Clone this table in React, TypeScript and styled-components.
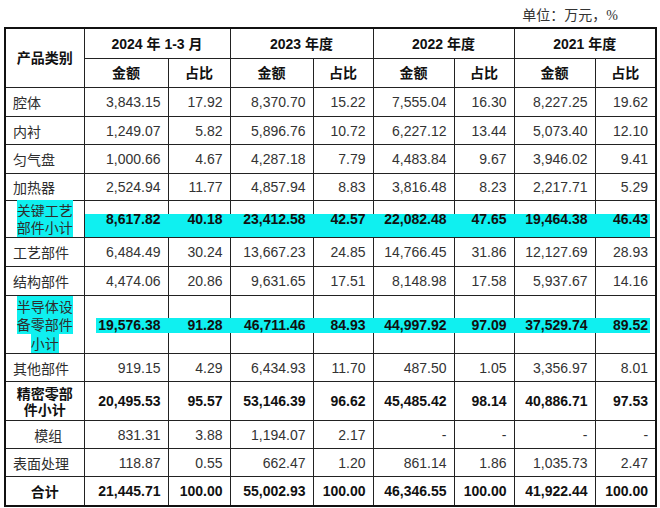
import React from 'react';
import styled, { createGlobalStyle } from 'styled-components';

const GlobalStyle = createGlobalStyle`
  html, body {
    margin: 0;
    padding: 0;
    background: #fff;
  }
  body {
    font-family: "Liberation Sans", "Noto Sans CJK SC", sans-serif;
    color: #262626;
  }
`;

const HIGHLIGHT = '#0ff0f0';

const Page = styled.div`
  width: 660px;
  height: 508px;
  padding-left: 4px;
  box-sizing: border-box;
`;

const Caption = styled.div`
  height: 27px;
  box-sizing: border-box;
  padding: 6px 42px 0 0;
  line-height: 20px;
  text-align: right;
  font-family: "Liberation Serif", "Noto Sans CJK SC", serif;
  font-size: 14px;
  color: #333;
`;

const Table = styled.table`
  width: 651px;
  table-layout: fixed;
  border-collapse: collapse;
  border: 2px solid #111;
  font-size: 14px;
`;

const HeadCell = styled.th<{ $h?: number }>`
  border: 1px solid #222;
  padding: 0;
  height: ${({ $h }) => ($h ? `${$h}px` : 'auto')};
  font-weight: bold;
  color: #111;
  text-align: center;
  vertical-align: middle;
  line-height: 18px;
`;

const Label = styled.td<{ $align: string; $bold?: boolean; $lh: number; $pad: number }>`
  border: 1px solid #222;
  padding: 0 0 0 ${({ $pad }) => $pad}px;
  font-family: "Noto Sans CJK SC", sans-serif;
  text-align: ${({ $align }) => $align};
  vertical-align: middle;
  font-weight: ${({ $bold }) => ($bold ? 'bold' : 'normal')};
  color: ${({ $bold }) => ($bold ? '#111' : '#2e2e2e')};
  line-height: ${({ $lh }) => $lh}px;
  white-space: nowrap;
`;

const Num = styled.td<{ $bold?: boolean }>`
  position: relative;
  border: 1px solid #222;
  padding: 0 7px 0 0;
  text-align: right;
  vertical-align: middle;
  font-weight: ${({ $bold }) => ($bold ? 'bold' : 'normal')};
  color: ${({ $bold }) => ($bold ? '#111' : '#333')};
  white-space: nowrap;
`;

const Txt = styled.span<{ $mark?: boolean }>`
  position: relative;
  z-index: 2;
  background: ${({ $mark }) => ($mark ? HIGHLIGHT : 'transparent')};
`;

const Band = styled.span<{ $top: number; $left: number; $w: number; $h: number }>`
  position: absolute;
  z-index: 1;
  top: ${({ $top }) => $top}px;
  left: ${({ $left }) => $left}px;
  width: ${({ $w }) => $w}px;
  height: ${({ $h }) => $h}px;
  background: ${HIGHLIGHT};
`;

type Row = {
  lines: string[];
  values: string[];
  h: number;
  align?: 'left' | 'center';
  bold?: boolean;
  mark?: boolean;
  lh?: number;
  pad?: number;
  band?: { top: number; left: number; w: number; h: number };
};

const widths = [79, 84, 62, 83, 60, 81, 60, 81, 61];
const periods = ['2024 年 1-3 月', '2023 年度', '2022 年度', '2021 年度'];

const rows: Row[] = [
  { lines: ['腔体'], values: ['3,843.15', '17.92', '8,370.70', '15.22', '7,555.04', '16.30', '8,227.25', '19.62'], h: 29 },
  { lines: ['内衬'], values: ['1,249.07', '5.82', '5,896.76', '10.72', '6,227.12', '13.44', '5,073.40', '12.10'], h: 28 },
  { lines: ['匀气盘'], values: ['1,000.66', '4.67', '4,287.18', '7.79', '4,483.84', '9.67', '3,946.02', '9.41'], h: 29 },
  { lines: ['加热器'], values: ['2,524.94', '11.77', '4,857.94', '8.83', '3,816.48', '8.23', '2,217.71', '5.29'], h: 27 },
  {
    lines: ['关键工艺', '部件小计'],
    values: ['8,617.82', '40.18', '23,412.58', '42.57', '22,082.48', '47.65', '19,464.38', '46.43'],
    h: 37,
    align: 'center',
    bold: true,
    mark: true,
    lh: 17,
    pad: 0,
    band: { top: 13, left: 0, w: 565, h: 23 },
  },
  { lines: ['工艺部件'], values: ['6,484.49', '30.24', '13,667.23', '24.85', '14,766.45', '31.86', '12,127.69', '28.93'], h: 29 },
  { lines: ['结构部件'], values: ['4,474.06', '20.86', '9,631.65', '17.51', '8,148.98', '17.58', '5,937.67', '14.16'], h: 29 },
  {
    lines: ['半导体设', '备零部件', '小计'],
    values: ['19,576.38', '91.28', '46,711.46', '84.93', '44,997.92', '97.09', '37,529.74', '89.52'],
    h: 58,
    align: 'center',
    bold: true,
    mark: true,
    lh: 18.5,
    pad: 0,
    band: { top: 22, left: 11, w: 554, h: 15 },
  },
  { lines: ['其他部件'], values: ['919.15', '4.29', '6,434.93', '11.70', '487.50', '1.05', '3,356.97', '8.01'], h: 28 },
  {
    lines: ['精密零部', '件小计'],
    values: ['20,495.53', '95.57', '53,146.39', '96.62', '45,485.42', '98.14', '40,886.71', '97.53'],
    h: 39,
    align: 'center',
    bold: true,
    lh: 16,
    pad: 0,
  },
  { lines: ['模组'], values: ['831.31', '3.88', '1,194.07', '2.17', '-', '-', '-', '-'], h: 28, align: 'center', pad: 7 },
  { lines: ['表面处理'], values: ['118.87', '0.55', '662.47', '1.20', '861.14', '1.86', '1,035.73', '2.47'], h: 28 },
  {
    lines: ['合计'],
    values: ['21,445.71', '100.00', '55,002.93', '100.00', '46,346.55', '100.00', '41,922.44', '100.00'],
    h: 29,
    align: 'center',
    bold: true,
    pad: 0,
  },
];

const LabelText = ({ row }: { row: Row }) => (
  <>
    {row.lines.map((line, i) => (
      <React.Fragment key={line}>
        {i > 0 && <br />}
        <Txt $mark={row.mark}>{line}</Txt>
      </React.Fragment>
    ))}
  </>
);

export default function App() {
  return (
    <Page>
      <GlobalStyle />
      <Caption>单位：万元，%</Caption>
      <Table>
        <colgroup>
          {widths.map((w, i) => (
            <col key={i} style={{ width: w }} />
          ))}
        </colgroup>
        <thead>
          <tr>
            <HeadCell rowSpan={2}>产品类别</HeadCell>
            {periods.map((p) => (
              <HeadCell key={p} colSpan={2} $h={29}>
                {p}
              </HeadCell>
            ))}
          </tr>
          <tr>
            {periods.map((p) => (
              <React.Fragment key={p}>
                <HeadCell $h={28}>金额</HeadCell>
                <HeadCell $h={28}>占比</HeadCell>
              </React.Fragment>
            ))}
          </tr>
        </thead>
        <tbody>
          {rows.map((row) => (
            <tr key={row.lines.join('')} style={{ height: row.h }}>
              <Label
                $align={row.align ?? 'left'}
                $bold={row.bold && !row.mark}
                $lh={row.lh ?? 18}
                $pad={row.pad ?? 7}
              >
                <LabelText row={row} />
              </Label>
              {row.values.map((v, i) => (
                <Num key={i} $bold={row.bold}>
                  {i === 0 && row.band && (
                    <Band $top={row.band.top} $left={row.band.left} $w={row.band.w} $h={row.band.h} />
                  )}
                  <Txt>{v}</Txt>
                </Num>
              ))}
            </tr>
          ))}
        </tbody>
      </Table>
    </Page>
  );
}
